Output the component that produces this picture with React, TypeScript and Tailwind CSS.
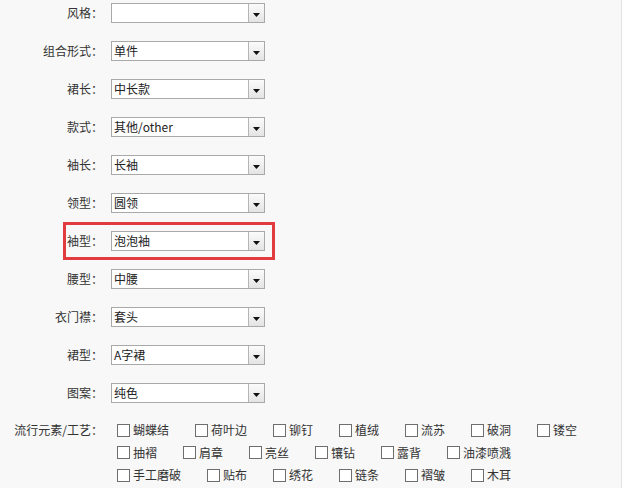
const fields = [
  { label: "风格：", value: "" },
  { label: "组合形式：", value: "单件" },
  { label: "裙长：", value: "中长款" },
  { label: "款式：", value: "其他/other" },
  { label: "袖长：", value: "长袖" },
  { label: "领型：", value: "圆领" },
  { label: "袖型：", value: "泡泡袖", marked: true },
  { label: "腰型：", value: "中腰" },
  { label: "衣门襟：", value: "套头" },
  { label: "裙型：", value: "A字裙" },
  { label: "图案：", value: "纯色" },
];

const craftRows = [
  { h: "h-[22px]", items: ["蝴蝶结", "荷叶边", "铆钉", "植绒", "流苏", "破洞", "镂空"] },
  { h: "h-[23px]", items: ["抽褶", "肩章", "亮丝", "镶钻", "露背", "油漆喷溅"] },
  { h: "h-[22px]", items: ["手工磨破", "贴布", "绣花", "链条", "褶皱", "木耳"] },
];

function Select({ value }: { value: string }) {
  return (
    <div className="flex h-[20px] w-[154px] border border-[#a9a9a9] bg-white">
      <div className="flex-1 pl-[2px] text-[12px] leading-[18px] text-[#222]">{value}</div>
      <div className="flex w-[16px] items-center justify-center border-l border-[#b5b5b5] bg-gradient-to-b from-[#fbfbfb] to-[#e4e4e4] pt-[4px]">
        <svg width="7" height="4" viewBox="0 0 7 4">
          <path d="M0 0h7L3.5 4z" fill="#111" />
        </svg>
      </div>
    </div>
  );
}

export default function App() {
  return (
    <div
      className="flex h-[488px] w-[630px] overflow-hidden bg-white text-[#333]"
      style={{ fontFamily: '"Noto Sans CJK SC", "Liberation Sans", sans-serif' }}
    >
      <div className="w-[622px] border-r border-[#e2e2e2] bg-[#f8f8f8] pt-[3px]">
        {fields.map((f) => (
          <div key={f.label} className="relative mb-[18px] flex h-[20px] items-center">
            <div className="w-[103px] text-right text-[12px]">{f.label}</div>
            <div className="ml-[8px]">
              <Select value={f.value} />
            </div>
            {f.marked && (
              <div className="pointer-events-none absolute left-[63px] top-[-9px] h-[38px] w-[212px] border-[3px] border-[#e23b3f]" />
            )}
          </div>
        ))}

        <div className="-mt-[2px] flex">
          <div className="flex h-[22px] w-[103px] items-center justify-end text-[12px]">流行元素/工艺：</div>
          <div className="ml-[14px] flex flex-col">
            {craftRows.map((row, i) => (
              <div key={i} className={`flex items-center ${row.h}`}>
                {row.items.map((t) => (
                  <label key={t} className="mr-[26px] flex items-center text-[12px]">
                    <span className="h-[13px] w-[13px] border border-[#6e6e6e] bg-white" />
                    <span className="ml-[3px]">{t}</span>
                  </label>
                ))}
              </div>
            ))}
          </div>
        </div>
      </div>
    </div>
  );
}
